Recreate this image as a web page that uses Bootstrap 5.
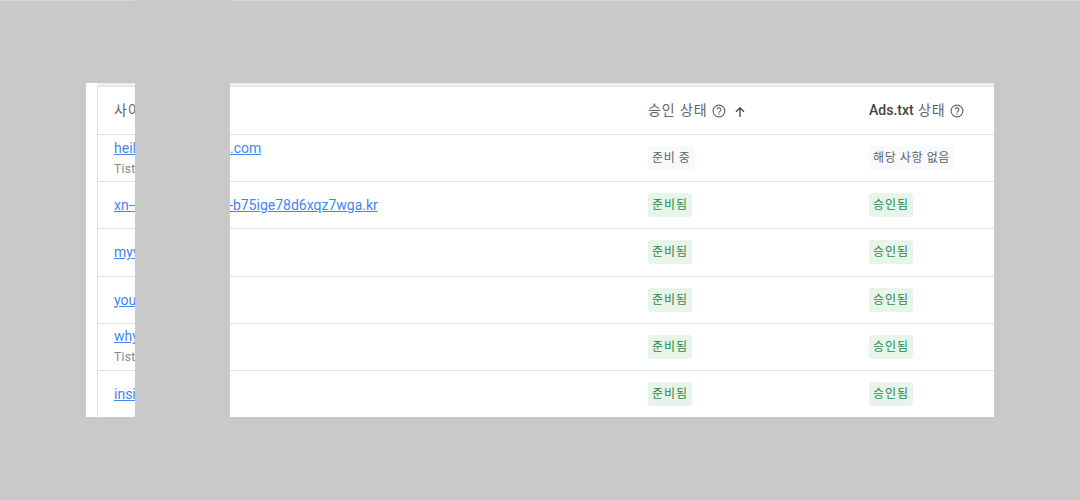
<!DOCTYPE html>
<html lang="ko"><head><meta charset="utf-8">
<link rel="stylesheet" href="https://cdn.jsdelivr.net/npm/bootstrap@5.3.0/dist/css/bootstrap.min.css">
<style>
html,body{height:500px;overflow:hidden}
body{background:#c9c9c9;font-family:Roboto,"Noto Sans CJK KR",sans-serif;font-size:14px;position:relative}
.topedge{height:1px;background:#d6d6d6}
.sheet{margin:82px 0 0 86px;width:908px;height:334px;background:#fff;overflow:hidden;padding:3px 0 0 11px;position:relative}
.sheet::before{content:"";position:absolute;left:11px;right:0;top:0;height:3px;background:#eeeeee}
.frame{border-left:1px solid #e0e0e0;border-top:1px solid #e0e0e0;position:relative}
.rowline{display:grid;grid-template-columns:534px 221px 1fr;height:47.2px;border-bottom:1px solid #e0e0e0;align-items:center;padding:0 0 0 16px}
.rowline.head{height:48px;color:#5f6368;letter-spacing:.9px}
.rowline.head b{font-weight:500;color:#444;letter-spacing:0}
.sitelink{color:#4285f4;text-decoration:underline;line-height:20px;display:block;white-space:nowrap}
.subnote{font-size:12px;color:#80868b;line-height:20px;display:block;letter-spacing:.3px;margin-top:1px}
.tag{display:inline-block;font-size:12px;line-height:24px;height:24px;padding:0 4px;border-radius:3px;letter-spacing:.6px}
.tag-ok{background:#e6f4ea;color:#2b8a4a;letter-spacing:.9px}
.tag-wait{background:#f8f9fa;color:#5f6368}
.arrowico{margin-top:2px}
.maskblock{position:absolute;left:135px;top:0;width:95px;height:417px;background:#c9c9c9}
</style></head><body>
<div class="topedge"></div>
<div class="sheet"><div class="frame">
<div class="rowline head"><div>사이트</div>
<div class="d-flex align-items-center">승인 상태<svg class="ms-1" width="14" height="14" viewBox="0 0 14 14" fill="none" stroke="#5f6368" stroke-width="1.1"><circle cx="7" cy="7" r="5.9"/><path d="M5.1 5.6a1.9 1.9 0 1 1 2.9 1.6c-.7.4-1 .8-1 1.5"/><path d="M7 9.6v1.1"/></svg><svg class="ms-2 arrowico" width="12" height="12" viewBox="0 0 12 12" fill="none" stroke="#3c4043" stroke-width="1.3"><path d="M6 11V2M2 5.8 6 1.8l4 4"/></svg></div>
<div class="d-flex align-items-center"><b>Ads.txt</b>&nbsp;상태<svg class="ms-1" width="14" height="14" viewBox="0 0 14 14" fill="none" stroke="#5f6368" stroke-width="1.1"><circle cx="7" cy="7" r="5.9"/><path d="M5.1 5.6a1.9 1.9 0 1 1 2.9 1.6c-.7.4-1 .8-1 1.5"/><path d="M7 9.6v1.1"/></svg></div></div>
<div class="rowline"><div><a class="sitelink" href="#">heilbronner-examp.com</a><span class="subnote">Tistory</span></div><div><span class="tag tag-wait">준비 중</span></div><div><span class="tag tag-wait">해당 사항 없음</span></div></div>
<div class="rowline"><div><a class="sitelink" href="#">xn--2o2b17aexami-b75ige78d6xqz7wga.kr</a></div><div><span class="tag tag-ok">준비됨</span></div><div><span class="tag tag-ok">승인됨</span></div></div>
<div class="rowline"><div><a class="sitelink" href="#">mywebsite.com</a></div><div><span class="tag tag-ok">준비됨</span></div><div><span class="tag tag-ok">승인됨</span></div></div>
<div class="rowline"><div><a class="sitelink" href="#">yourwebsite.com</a></div><div><span class="tag tag-ok">준비됨</span></div><div><span class="tag tag-ok">승인됨</span></div></div>
<div class="rowline"><div><a class="sitelink" href="#">whywebsite.com</a><span class="subnote">Tistory</span></div><div><span class="tag tag-ok">준비됨</span></div><div><span class="tag tag-ok">승인됨</span></div></div>
<div class="rowline"><div><a class="sitelink" href="#">insidesite.co</a></div><div><span class="tag tag-ok">준비됨</span></div><div><span class="tag tag-ok">승인됨</span></div></div>
</div></div>
<div class="maskblock"></div>
</body></html>
